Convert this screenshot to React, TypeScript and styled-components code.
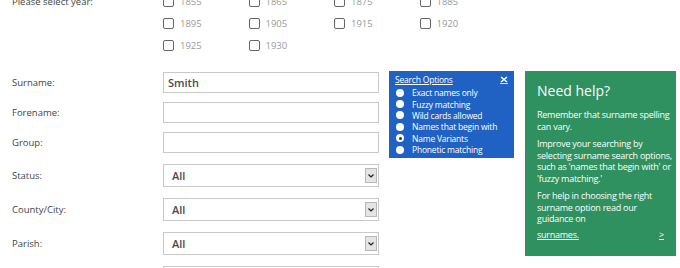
import styled, { createGlobalStyle } from "styled-components";

const GlobalStyle = createGlobalStyle`
  html, body {
    margin: 0;
    padding: 0;
    background: #ffffff;
    overflow: hidden;
  }
  body {
    font-family: "Open Sans", "DejaVu Sans", sans-serif;
    color: #444;
  }
`;

const Page = styled.div`
  width: 680px;
  height: 268px;
  overflow: hidden;
`;

const Shifted = styled.div`
  margin-top: -10px;
  padding-left: 12px;
`;

const YearSection = styled.div`
  display: grid;
  grid-template-columns: 151px 1fr;
`;

const FieldLabel = styled.div`
  font-size: 9.5px;
  color: #444;
  height: 22px;
  display: flex;
  align-items: center;
`;

const YearGrid = styled.div`
  display: grid;
  grid-template-columns: repeat(4, 85.5px);
  grid-auto-rows: 22px;
`;

const YearOption = styled.label`
  display: flex;
  align-items: center;
  gap: 6px;
  font-size: 9.5px;
  color: #9a9a9a;
`;

const Box = styled.span`
  width: 9px;
  height: 9px;
  border: 1px solid #666;
  border-radius: 2px;
  background: #fff;
`;

const Lower = styled.div`
  display: flex;
  align-items: flex-start;
  margin-top: 16px;
`;

const Form = styled.div`
  width: 367px;
  display: flex;
  flex-direction: column;
`;

const Row = styled.div<{ $gap: number }>`
  display: grid;
  grid-template-columns: 151px 216px;
  align-items: center;
  margin-bottom: ${(p) => p.$gap}px;
`;

const RowLabel = styled.div`
  font-size: 9.5px;
  color: #444;
`;

const TextBox = styled.div`
  height: 19px;
  border: 1px solid #c9c9c9;
  background: #fff;
  font-size: 11px;
  font-weight: 600;
  color: #4a4a4a;
  padding-left: 4px;
  display: flex;
  align-items: center;
`;

const SelectBox = styled.div`
  height: 21px;
  border: 1px solid #c9c9c9;
  background: #fff;
  font-size: 11px;
  font-weight: 600;
  color: #4a4a4a;
  padding-left: 8px;
  padding-right: 1px;
  display: flex;
  align-items: center;
  justify-content: space-between;
`;

const ArrowBox = styled.span`
  width: 10px;
  height: 13px;
  border: 1px solid #b8b8b8;
  background: #e4e4e4;
  display: flex;
  align-items: center;
  justify-content: center;
`;

const Options = styled.div`
  width: 125px;
  margin-left: 10px;
  margin-top: -1px;
  background: #1f62c4;
  color: #fff;
  padding: 3px 6px 3px 6px;
  box-sizing: border-box;
`;

const OptionsHead = styled.div`
  display: flex;
  justify-content: space-between;
  align-items: center;
  font-size: 8.5px;
  letter-spacing: -0.2px;
  margin-bottom: 2px;
`;

const HeadLink = styled.span`
  text-decoration: underline;
`;

const Choice = styled.div`
  display: flex;
  align-items: center;
  gap: 8px;
  font-size: 8.5px;
  letter-spacing: -0.2px;
  height: 11.4px;
  white-space: nowrap;
`;

const Radio = styled.span<{ $on?: boolean }>`
  width: 8px;
  height: 8px;
  border-radius: 50%;
  background: #fff;
  margin-left: 1px;
  flex: none;
  display: flex;
  align-items: center;
  justify-content: center;
  &::after {
    content: "";
    width: 3px;
    height: 3px;
    border-radius: 50%;
    background: ${(p) => (p.$on ? "#333" : "transparent")};
  }
`;

const Help = styled.div`
  width: 151px;
  height: 185px;
  margin-left: 11px;
  margin-top: -1px;
  background: #2e915f;
  color: #fff;
  padding: 10px 8px 0 12px;
  box-sizing: border-box;
`;

const HelpTitle = styled.div`
  font-size: 14px;
  margin-bottom: 9px;
`;

const HelpText = styled.p`
  font-size: 9px;
  letter-spacing: -0.25px;
  line-height: 11.5px;
  white-space: nowrap;
  margin: 0 0 6px 0;
`;

const HelpLinkRow = styled.div`
  display: flex;
  justify-content: space-between;
  font-size: 9px;
  letter-spacing: -0.25px;
  margin-top: -3px;
  padding-right: 4px;
  text-decoration: underline;
`;

const years = [
  ["1855", "1865", "1875", "1885"],
  ["1895", "1905", "1915", "1920"],
  ["1925", "1930"],
];

const options = [
  "Exact names only",
  "Fuzzy matching",
  "Wild cards allowed",
  "Names that begin with",
  "Name Variants",
  "Phonetic matching",
];

const fields = [
  { label: "Surname:", value: "Smith", gap: 9 },
  { label: "Forename:", value: "", gap: 9 },
  { label: "Group:", value: "", gap: 11 },
];

function Chevron() {
  return (
    <svg width="6" height="4" viewBox="0 0 6 4">
      <path d="M0.5 0.5 L3 3 L5.5 0.5" stroke="#222" strokeWidth="1.2" fill="none" />
    </svg>
  );
}

export default function App() {
  return (
    <Page>
      <GlobalStyle />
      <Shifted>
        <YearSection>
          <FieldLabel>Please select year:</FieldLabel>
          <YearGrid>
            {years.flat().map((y) => (
              <YearOption key={y}>
                <Box />
                {y}
              </YearOption>
            ))}
          </YearGrid>
        </YearSection>
        <Lower>
          <Form>
            {fields.map((f) => (
              <Row $gap={f.gap} key={f.label}>
                <RowLabel>{f.label}</RowLabel>
                <TextBox>{f.value}</TextBox>
              </Row>
            ))}
            {["Status:", "County/City:", "Parish:", "Place:"].map((l) => (
              <Row $gap={11} key={l}>
                <RowLabel>{l}</RowLabel>
                <SelectBox>
                  All
                  <ArrowBox>
                    <Chevron />
                  </ArrowBox>
                </SelectBox>
              </Row>
            ))}
          </Form>
          <Options>
            <OptionsHead>
              <HeadLink>Search Options</HeadLink>
              <svg width="8" height="8" viewBox="0 0 8 8">
                <path d="M1 1 L7 6 M7 1 L1 6" stroke="#fff" strokeWidth="1.6" />
                <path d="M0 7.5 H8" stroke="#fff" strokeWidth="0.8" />
              </svg>
            </OptionsHead>
            {options.map((o) => (
              <Choice key={o}>
                <Radio $on={o === "Name Variants"} />
                {o}
              </Choice>
            ))}
          </Options>
          <Help>
            <HelpTitle>Need help?</HelpTitle>
            <HelpText>
              Remember that surname spelling
              <br />
              can vary.
            </HelpText>
            <HelpText>
              Improve your searching by
              <br />
              selecting surname search options,
              <br />
              such as 'names that begin with' or
              <br />
              'fuzzy matching.'
            </HelpText>
            <HelpText>
              For help in choosing the right
              <br />
              surname option read our
              <br />
              guidance on
            </HelpText>
            <HelpLinkRow>
              <span>surnames.</span>
              <span>&gt;</span>
            </HelpLinkRow>
          </Help>
        </Lower>
      </Shifted>
    </Page>
  );
}
